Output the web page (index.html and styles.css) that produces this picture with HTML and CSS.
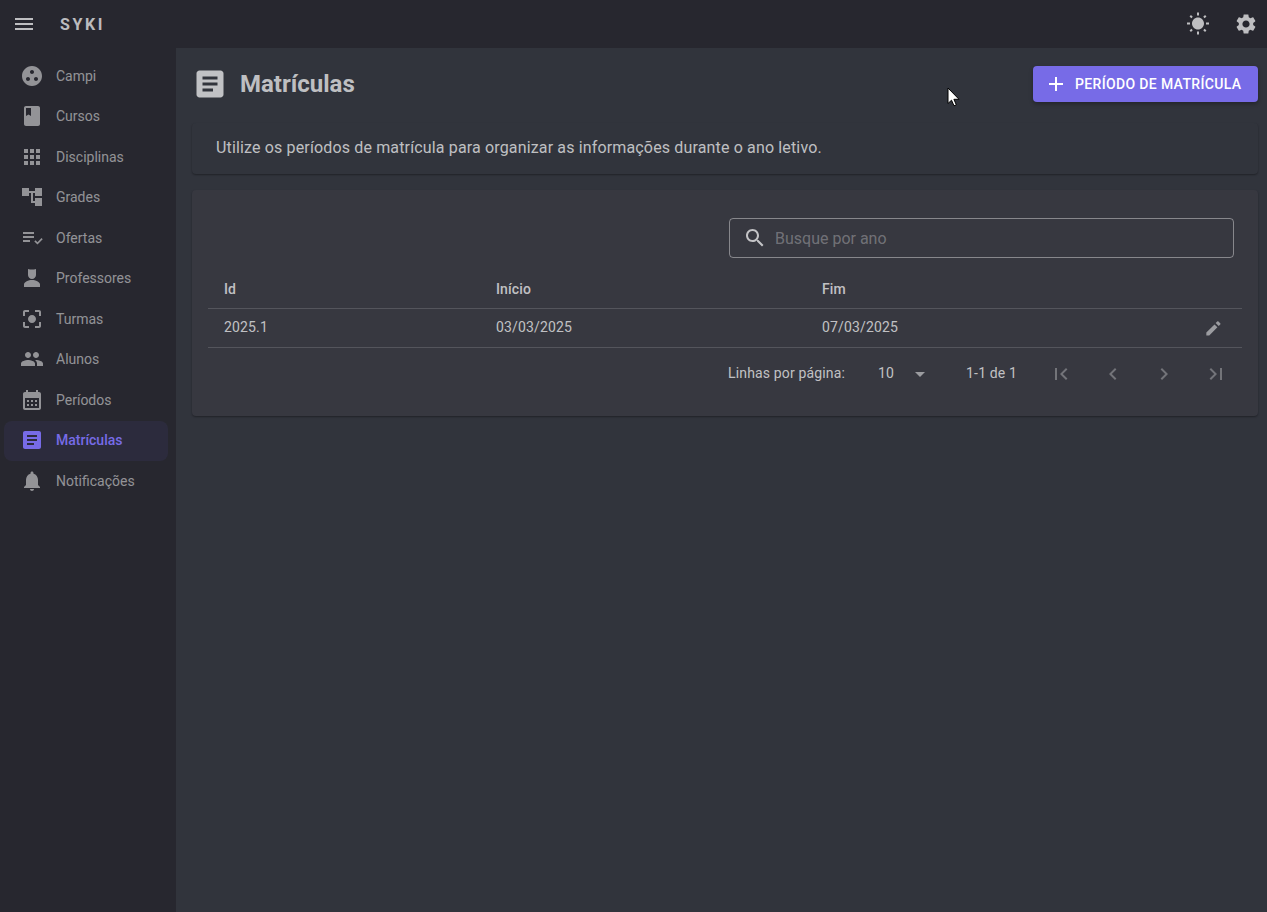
FILE: index.html
```html
<!DOCTYPE html>
<html lang="pt-BR">
<head>
    <meta charset="UTF-8">
    <meta name="viewport" content="width=device-width, initial-scale=1.0">
    <title>Syki - Matrículas</title>
    <link rel="stylesheet" href="styles.css">
</head>
<body>
    <svg class="sprite" xmlns="http://www.w3.org/2000/svg">
        <symbol id="i-menu" viewBox="0 0 24 24"><path d="M3 18h18v-2H3v2zm0-5h18v-2H3v2zm0-7v2h18V6H3z"/></symbol>
        <symbol id="i-sun" viewBox="0 0 24 24"><path d="M6.76 4.84l-1.8-1.79-1.41 1.41 1.79 1.79 1.42-1.41zM4 10.5H1v2h3v-2zm9-9.95h-2V3.5h2V.55zm7.45 3.91l-1.41-1.41-1.79 1.79 1.41 1.41 1.79-1.79zm-3.21 13.7l1.79 1.8 1.41-1.41-1.8-1.79-1.4 1.4zM20 10.5v2h3v-2h-3zm-8-5c-3.31 0-6 2.69-6 6s2.69 6 6 6 6-2.69 6-6-2.69-6-6-6zm-1 16.95h2V19.5h-2v2.95zm-7.45-3.91l1.41 1.41 1.79-1.8-1.41-1.41-1.79 1.8z"/></symbol>
        <symbol id="i-gear" viewBox="0 0 24 24"><path d="M19.14 12.94c.04-.3.06-.61.06-.94 0-.32-.02-.64-.07-.94l2.03-1.58c.18-.14.23-.41.12-.61l-1.92-3.32c-.12-.22-.37-.29-.59-.22l-2.39.96c-.5-.38-1.03-.7-1.62-.94l-.36-2.54c-.04-.24-.24-.41-.48-.41h-3.84c-.24 0-.43.17-.47.41l-.36 2.54c-.59.24-1.13.57-1.62.94l-2.39-.96c-.22-.08-.47 0-.59.22L2.74 8.87c-.12.21-.08.47.12.61l2.03 1.58c-.05.3-.09.63-.09.94s.02.64.07.94l-2.03 1.58c-.18.14-.23.41-.12.61l1.92 3.32c.12.22.37.29.59.22l2.39-.96c.5.38 1.03.7 1.62.94l.36 2.54c.05.24.24.41.48.41h3.84c.24 0 .44-.17.47-.41l.36-2.54c.59-.24 1.13-.56 1.62-.94l2.39.96c.22.08.47 0 .59-.22l1.92-3.32c.12-.22.07-.47-.12-.61l-2.01-1.58zM12 15.6c-1.98 0-3.6-1.62-3.6-3.6s1.62-3.6 3.6-3.6 3.6 1.62 3.6 3.6-1.62 3.6-3.6 3.6z"/></symbol>
        <symbol id="i-campi" viewBox="0 0 24 24"><path d="M12 2C6.47 2 2 6.47 2 12s4.47 10 10 10 10-4.47 10-10S17.53 2 12 2zM8 17c-1.1 0-2-.9-2-2s.9-2 2-2 2 .9 2 2-.9 2-2 2zm4-7c-1.1 0-2-.9-2-2s.9-2 2-2 2 .9 2 2-.9 2-2 2zm4 7c-1.1 0-2-.9-2-2s.9-2 2-2 2 .9 2 2-.9 2-2 2z"/></symbol>
        <symbol id="i-book" viewBox="0 0 24 24"><path d="M18 2H6c-1.1 0-2 .9-2 2v16c0 1.1.9 2 2 2h12c1.1 0 2-.9 2-2V4c0-1.1-.9-2-2-2zM6 4h5v8l-2.5-1.5L6 12V4z"/></symbol>
        <symbol id="i-apps" viewBox="0 0 24 24"><path d="M4 8h4V4H4v4zm6 12h4v-4h-4v4zm-6 0h4v-4H4v4zm0-6h4v-4H4v4zm6 0h4v-4h-4v4zm6-10v4h4V4h-4zm-6 4h4V4h-4v4zm6 6h4v-4h-4v4zm0 6h4v-4h-4v4z"/></symbol>
        <symbol id="i-tree" viewBox="0 0 24 24"><path d="M22 11V3h-7v3H9V3H2v8h7V8h2v10h4v3h7v-8h-7v3h-2V8h2v3z"/></symbol>
        <symbol id="i-check" viewBox="0 0 24 24"><path d="M14 10H3v2h11v-2zm0-4H3v2h11V6zM3 16h7v-2H3v2zm18.500-4L22.700 13.200l-5.200 5.400-3.200-3.200 1.200-1.200 2 2z"/></symbol>
        <symbol id="i-person" viewBox="0 0 24 24"><path d="M8 3l2 .6h4l2-.6v6c0 2.200-1.800 4-4 4s-4-1.800-4-4zM12 14c-3.500 0-8 1.800-8 4.500V21h16v-2.500c0-2.700-4.500-4.500-8-4.500z"/></symbol>
        <symbol id="i-focus" viewBox="0 0 24 24"><path d="M12 8c-2.210 0-4 1.790-4 4s1.790 4 4 4 4-1.790 4-4-1.790-4-4-4zm-7 7H3v4c0 1.100.9 2 2 2h4v-2H5v-4zM5 5h4V3H5c-1.100 0-2 .9-2 2v4h2V5zm14-2h-4v2h4v4h2V5c0-1.100-.9-2-2-2zm0 16h-4v2h4c1.100 0 2-.9 2-2v-4h-2v4z"/></symbol>
        <symbol id="i-people" viewBox="0 0 24 24"><path d="M16 11c1.660 0 2.990-1.340 2.990-3S17.660 5 16 5c-1.660 0-3 1.340-3 3s1.340 3 3 3zm-8 0c1.660 0 2.990-1.340 2.990-3S9.660 5 8 5C6.340 5 5 6.340 5 8s1.340 3 3 3zm0 2c-2.330 0-7 1.170-7 3.500V19h14v-2.500c0-2.330-4.670-3.500-7-3.500zm8 0c-.29 0-.62.02-.97.05 1.160.84 1.970 1.970 1.970 3.450V19h6v-2.500c0-2.330-4.670-3.500-7-3.500z"/></symbol>
        <symbol id="i-calendar" viewBox="0 0 24 24"><path d="M19 4h-1V2h-2v2H8V2H6v2H5c-1.110 0-1.990.9-1.990 2L3 20c0 1.100.89 2 2 2h14c1.100 0 2-.9 2-2V6c0-1.100-.9-2-2-2zm0 16H5V10h14v10zM9 14H7v-2h2v2zm4 0h-2v-2h2v2zm4 0h-2v-2h2v2zm-8 4H7v-2h2v2zm4 0h-2v-2h2v2zm4 0h-2v-2h2v2z"/></symbol>
        <symbol id="i-article" viewBox="0 0 24 24"><path d="M19 3H5c-1.100 0-2 .9-2 2v14c0 1.100.9 2 2 2h14c1.100 0 2-.9 2-2V5c0-1.100-.9-2-2-2zm-5 14H7v-2h7v2zm3-4H7v-2h10v2zm0-4H7V7h10v2z"/></symbol>
        <symbol id="i-bell" viewBox="0 0 24 24"><path d="M12 22c1.100 0 2-.9 2-2h-4c0 1.100.89 2 2 2zm6-6v-5c0-3.070-1.640-5.640-4.500-6.320V4c0-.83-.67-1.500-1.500-1.500s-1.500.67-1.500 1.500v.68C7.630 5.360 6 7.920 6 11v5l-2 2v1h16v-1l-2-2z"/></symbol>
        <symbol id="i-add" viewBox="0 0 24 24"><path d="M19 13h-6v6h-2v-6H5v-2h6V5h2v6h6v2z"/></symbol>
        <symbol id="i-search" viewBox="0 0 24 24"><path d="M15.500 14h-.79l-.28-.27C15.410 12.590 16 11.110 16 9.500 16 5.910 13.090 3 9.500 3S3 5.910 3 9.500 5.910 16 9.500 16c1.610 0 3.090-.59 4.230-1.570l.27.28v.79l5 4.990L20.490 19l-4.990-5zm-6 0C7.010 14 5 11.990 5 9.500S7.010 5 9.500 5 14 7.010 14 9.500 11.990 14 9.500 14z"/></symbol>
        <symbol id="i-edit" viewBox="0 0 24 24"><path d="M4 17.500V21h3.500L17.300 11.200l-3.500-3.500zM20.700 7.800c.4-.4.4-1 0-1.400l-2.200-2.200c-.4-.4-1-.4-1.400 0l-1.900 1.900 3.600 3.600z"/></symbol>
        <symbol id="i-drop" viewBox="0 0 24 24"><path d="M7 10l5 5 5-5z"/></symbol>
        <symbol id="i-first" viewBox="0 0 24 24"><path d="M18.410 16.590L13.820 12l4.590-4.590L17 6l-6 6 6 6zM6 6h2v12H6z"/></symbol>
        <symbol id="i-prev" viewBox="0 0 24 24"><path d="M15.410 7.410L14 6l-6 6 6 6 1.410-1.410L10.830 12z"/></symbol>
        <symbol id="i-next" viewBox="0 0 24 24"><path d="M10 6L8.590 7.410 13.170 12l-4.580 4.590L10 18l6-6z"/></symbol>
        <symbol id="i-last" viewBox="0 0 24 24"><path d="M5.590 7.410L10.180 12l-4.590 4.590L7 18l6-6-6-6zM16 6h2v12h-2z"/></symbol>
    </svg>

    <header class="appbar">
        <svg class="icon menu-btn"><use href="#i-menu"/></svg>
        <span class="brand">SYKI</span>
        <svg class="icon sun-btn"><use href="#i-sun"/></svg>
        <svg class="icon gear-btn"><use href="#i-gear"/></svg>
    </header>

    <div class="layout">
        <nav class="sidebar">
            <a class="nav-item"><svg class="icon"><use href="#i-campi"/></svg>Campi</a>
            <a class="nav-item"><svg class="icon"><use href="#i-book"/></svg>Cursos</a>
            <a class="nav-item"><svg class="icon"><use href="#i-apps"/></svg>Disciplinas</a>
            <a class="nav-item"><svg class="icon"><use href="#i-tree"/></svg>Grades</a>
            <a class="nav-item"><svg class="icon"><use href="#i-check"/></svg>Ofertas</a>
            <a class="nav-item"><svg class="icon"><use href="#i-person"/></svg>Professores</a>
            <a class="nav-item"><svg class="icon"><use href="#i-focus"/></svg>Turmas</a>
            <a class="nav-item"><svg class="icon"><use href="#i-people"/></svg>Alunos</a>
            <a class="nav-item"><svg class="icon"><use href="#i-calendar"/></svg>Períodos</a>
            <a class="nav-item active"><svg class="icon"><use href="#i-article"/></svg>Matrículas</a>
            <a class="nav-item"><svg class="icon"><use href="#i-bell"/></svg>Notificações</a>
        </nav>

        <main class="content">
            <div class="page-head">
                <svg class="icon page-icon"><use href="#i-article"/></svg>
                <h1>Matrículas</h1>
                <button class="primary-btn"><svg class="icon"><use href="#i-add"/></svg>PERÍODO DE MATRÍCULA</button>
            </div>

            <div class="card info">Utilize os períodos de matrícula para organizar as informações durante o ano letivo.</div>

            <section class="card table-card">
                <div class="toolbar">
                    <label class="search">
                        <svg class="icon"><use href="#i-search"/></svg>
                        <span>Busque por ano</span>
                    </label>
                </div>

                <div class="row head">
                    <span class="col-id">Id</span>
                    <span class="col-start">Início</span>
                    <span class="col-end">Fim</span>
                </div>
                <div class="row body">
                    <span class="col-id">2025.1</span>
                    <span class="col-start">03/03/2025</span>
                    <span class="col-end">07/03/2025</span>
                    <svg class="icon edit"><use href="#i-edit"/></svg>
                </div>

                <div class="pager">
                    <span class="pager-label">Linhas por página:</span>
                    <span class="pager-size">10</span>
                    <svg class="icon pager-drop"><use href="#i-drop"/></svg>
                    <span class="pager-count">1-1 de 1</span>
                    <svg class="icon"><use href="#i-first"/></svg>
                    <svg class="icon"><use href="#i-prev"/></svg>
                    <svg class="icon"><use href="#i-next"/></svg>
                    <svg class="icon"><use href="#i-last"/></svg>
                </div>
            </section>
        </main>
    </div>

    <!-- mouse pointer caught in the capture -->
    <svg class="pointer" width="14" height="20" viewBox="0 0 14 20"><path d="M1 1v15.500l3.500-3.300L7 18.800l2.300-1-2.400-5.500H12z" fill="#fff" stroke="#000" stroke-width="1"/></svg>
</body>
</html>
```

FILE: styles.css
```css
* {
    box-sizing: border-box;
}

html, body {
    height: 100%;
}

body {
    margin: 0;
    background-color: #31343c;
    color: rgba(255, 255, 255, 0.7);
    font-family: Roboto, "Liberation Sans", sans-serif;
    font-size: 14px;
    overflow: hidden;
}

.sprite {
    display: none;
}

.icon {
    width: 24px;
    height: 24px;
    fill: currentColor;
    flex-shrink: 0;
}

/* Top bar */
.appbar {
    height: 48px;
    background-color: #27272f;
    display: flex;
    align-items: center;
    padding: 0 9px 0 12px;
    color: rgba(255, 255, 255, 0.7);
}

.brand {
    margin-left: 24px;
    font-size: 16px;
    font-weight: 700;
    letter-spacing: 2.6px;
}

.sun-btn {
    margin-left: auto;
}

.gear-btn {
    margin-left: 24px;
}

/* Layout */
.layout {
    display: flex;
    height: 864px;
}

.sidebar {
    width: 176px;
    background-color: #27272f;
    padding: 8px 8px 0 4px;
    flex-shrink: 0;
}

.nav-item {
    display: flex;
    align-items: center;
    gap: 12px;
    height: 40.5px;
    padding: 0 0 1px 16px;
    border-radius: 8px;
    color: rgba(255, 255, 255, 0.5);
    font-size: 14px;
}

.nav-item.active {
    background-color: rgba(119, 107, 231, 0.08);
    color: #776be7;
    font-weight: 500;
}

/* Main area */
.content {
    flex: 1;
    padding: 18px 9px 0 16px;
}

.page-head {
    display: flex;
    align-items: center;
    height: 36px;
    margin-bottom: 21px;
}

.page-icon {
    width: 36px;
    height: 36px;
}

h1 {
    margin: 0 0 0 12px;
    font-size: 24px;
    font-weight: 700;
    line-height: 36px;
}

.primary-btn {
    margin-left: auto;
    width: 225px;
    height: 36px;
    display: flex;
    align-items: center;
    gap: 7px;
    padding: 0 0 0 11px;
    border: none;
    border-radius: 4px;
    background-color: #776be7;
    color: #fff;
    font-family: inherit;
    font-size: 14px;
    font-weight: 500;
    letter-spacing: 0.35px;
    white-space: nowrap;
    box-shadow: 0 2px 4px rgba(0, 0, 0, 0.3);
}

.card {
    background-color: #373840;
    border-radius: 4px;
    box-shadow: 0 1px 2px rgba(0, 0, 0, 0.35);
}

.info {
    height: 51px;
    margin-bottom: 16px;
    padding: 0 24px 2px;
    display: flex;
    align-items: center;
    background-color: #31343c;
    font-size: 16px;
    letter-spacing: 0.15px;
}

.table-card {
    height: 226px;
    padding: 0 16px;
    letter-spacing: 0.15px;
}

.toolbar {
    display: flex;
    justify-content: flex-end;
    padding: 28px 8px 12px 0;
}

.search {
    width: 505px;
    height: 40px;
    display: flex;
    align-items: center;
    gap: 8px;
    padding: 0 13px;
    border: 1px solid rgba(255, 255, 255, 0.4);
    border-radius: 4px;
    color: rgba(255, 255, 255, 0.7);
    font-size: 16px;
    letter-spacing: 0;
}

.search span {
    color: rgba(255, 255, 255, 0.3);
}

/* Table rows */
.row {
    display: flex;
    align-items: center;
    height: 39px;
    padding-left: 16px;
    border-bottom: 1px solid rgba(255, 255, 255, 0.15);
}

.row.head {
    font-weight: 500;
}

.row.body span {
    margin-bottom: 2px;
}

.col-id {
    width: 272px;
}

.col-start {
    width: 326px;
}

.edit {
    width: 20px;
    height: 20px;
    margin-left: auto;
    margin-right: 19px;
    color: rgba(255, 255, 255, 0.5);
}

/* Pagination */
.pager {
    display: flex;
    align-items: center;
    justify-content: flex-end;
    height: 51px;
    padding-right: 14px;
}

.pager span {
    margin-bottom: 2px;
}

.pager .icon {
    color: rgba(255, 255, 255, 0.3);
    margin-left: 27.67px;
}

.pager .pager-drop {
    color: rgba(255, 255, 255, 0.5);
    margin-left: 14px;
}

.pager-size {
    margin-left: 33px;
}

.pager-count {
    margin-left: 34px;
    margin-right: 4.33px;
}

.pointer {
    position: absolute;
    left: 947px;
    top: 87px;
}
```
